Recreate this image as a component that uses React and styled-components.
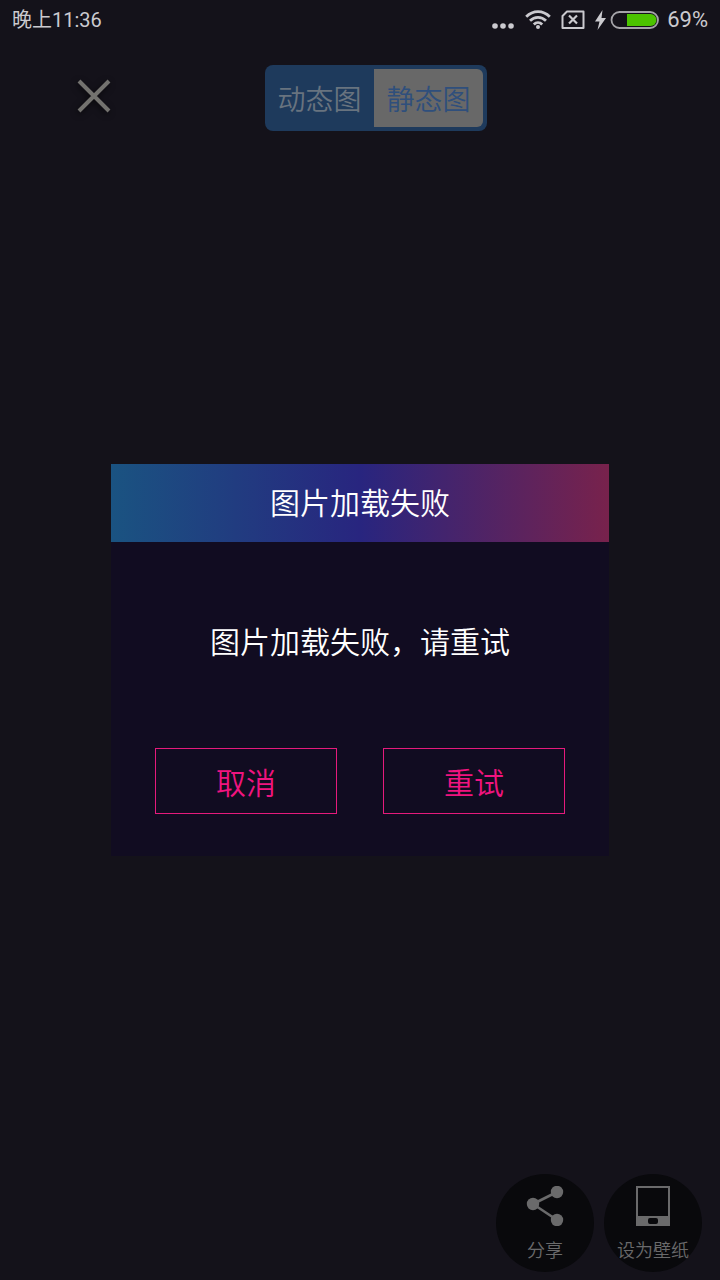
import React, { useState } from "react";
import styled, { createGlobalStyle } from "styled-components";

const GlobalStyle = createGlobalStyle`
  * {
    box-sizing: border-box;
  }

  body {
    margin: 0;
    background: #14121a;
    font-family: Roboto, "Noto Sans CJK SC", sans-serif;
  }

  button {
    margin: 0;
    padding: 0;
    border: none;
    background: none;
    font-family: "Noto Sans CJK SC", sans-serif;
    cursor: pointer;
  }
`;

const Page = styled.div`
  display: flex;
  flex-direction: column;
  min-height: 100vh;
`;

// System status bar
const StatusBar = styled.header`
  display: flex;
  align-items: center;
  justify-content: space-between;
  height: 40px;
  padding: 0 12px;
  color: #cbcacf;
  font-size: 20px;
  line-height: 40px;
`;

const StatusIcons = styled.div`
  display: flex;
  align-items: center;
  gap: 10px;

  svg {
    display: block;
  }
`;

const BatteryLevel = styled.div`
  display: flex;
  align-items: center;
  gap: 8px;
  font-size: 22px;
`;

// Close button and picture type switch
const TopBar = styled.nav`
  display: grid;
  grid-template-columns: 1fr auto 1fr;
  align-items: start;
  padding: 25px 32px 0 64px;
`;

const CloseButton = styled.button`
  display: grid;
  place-items: center;
  width: 60px;
  height: 62px;

  svg {
    filter: drop-shadow(-1px 2px 3px rgba(0, 0, 0, 0.6));
  }
`;

const Switch = styled.div`
  display: flex;
  height: 66px;
  padding: 4px 4px 4px 0;
  border-radius: 8px;
  background: #1e3a5c;
`;

const SwitchOption = styled.button`
  width: 109px;
  border-radius: 0 6px 6px 0;
  background: ${(props) => (props.$active ? "#686868" : "transparent")};
  color: ${(props) => (props.$active ? "#2f4f7c" : "#68737f")};
  font-size: 28px;
  font-weight: 350;
  line-height: 40px;
`;

const ActionBar = styled.footer`
  display: flex;
  justify-content: flex-end;
  gap: 10px;
  margin-top: auto;
  padding: 0 18px 8px;
`;

const ActionButton = styled.button`
  display: flex;
  flex-direction: column;
  align-items: center;
  gap: 10px;
  width: 98px;
  height: 98px;
  padding-top: 12px;
  border-radius: 50%;
  background: #09090c;
  color: #6a6a6b;
  font-size: 18px;
  font-weight: 350;
  line-height: 26px;
  white-space: nowrap;
`;

// Dialog sits over the page, centered below the status bar
const Overlay = styled.div`
  position: fixed;
  inset: 40px 0 0;
  display: grid;
  place-items: center;
`;

const Dialog = styled.section`
  width: calc(100% - 222px);
  max-width: 560px;
  background: #110c21;
  color: #ffffff;
  text-align: center;
`;

const DialogTitle = styled.h2`
  margin: 0;
  padding: 18px 0 16px;
  background: linear-gradient(90deg, #1a5381 0%, #28257f 50%, #78224c 100%);
  font-size: 30px;
  font-weight: 350;
  line-height: 44px;
`;

const DialogMessage = styled.p`
  margin: 0;
  padding: 79px 0 83px;
  font-size: 30px;
  font-weight: 350;
  line-height: 44px;
`;

const DialogActions = styled.div`
  display: grid;
  grid-template-columns: 1fr 1fr;
  gap: 46px;
  padding: 0 44px 42px;
`;

const DialogButton = styled.button`
  height: 66px;
  border: 1px solid #e51a7c;
  color: #f0147f;
  font-size: 30px;
  font-weight: 350;
  line-height: 44px;
`;

const MoreIcon = () => (
  <svg width="24" height="20" viewBox="0 0 24 20" fill="#cbcacf">
    <circle cx="4" cy="16" r="2.8" />
    <circle cx="12" cy="16" r="2.8" />
    <circle cx="20" cy="16" r="2.8" />
  </svg>
);

const WifiIcon = () => (
  <svg width="26" height="20" viewBox="0 0 26 20" fill="none" stroke="#cbcacf" strokeWidth="2.8">
    <path d="M1.2 6.8C8 0 18 0 24.8 6.8" />
    <path d="M5 10.8C9.6 6.2 16.4 6.2 21 10.8" />
    <path d="M8.8 14.4C11.2 12 14.8 12 17.2 14.4" />
    <circle cx="13" cy="17" r="2" fill="#cbcacf" stroke="none" />
  </svg>
);

const NoSimIcon = () => (
  <svg width="24" height="20" viewBox="0 0 24 20" fill="none" stroke="#cbcacf" strokeWidth="2">
    <path d="M6 1.5H22.5V18H1.5V6Z" strokeLinejoin="round" />
    <path d="M8 5.5L16 13.5M16 5.5L8 13.5" strokeWidth="2.2" />
  </svg>
);

const BatteryIcon = () => (
  <svg width="64" height="20" viewBox="0 0 64 20">
    <path d="M7.5 0L0 11.5H4.5L2.5 20L11 8H6.5Z" fill="#cbcacf" />
    <rect x="16.5" y="2" width="46.5" height="16" rx="8" fill="none" stroke="#a5a4a9" strokeWidth="1.8" />
    <path d="M32 4H55.5A6 6 0 0 1 55.5 16H32Z" fill="#4cc400" />
  </svg>
);

const CloseIcon = () => (
  <svg width="34" height="34" viewBox="0 0 34 34" stroke="#73726f" strokeWidth="4">
    <path d="M2 2L32 32M32 2L2 32" />
  </svg>
);

const ShareIcon = () => (
  <svg width="40" height="40" viewBox="0 0 40 40" fill="#6a6a6b">
    <path d="M32 6L8 18L32 34" fill="none" stroke="#6a6a6b" strokeWidth="2.6" />
    <circle cx="32" cy="6" r="6.2" />
    <circle cx="8" cy="18" r="6.2" />
    <circle cx="32" cy="34" r="6.2" />
  </svg>
);

const WallpaperIcon = () => (
  <svg width="40" height="40" viewBox="0 0 40 40">
    <path
      d="M3 0H37V40H3ZM5 2V30H35V2ZM17 32Q15 32 15 34V36Q15 38 17 38H23Q25 38 25 36V34Q25 32 23 32Z"
      fill="#6a6a6b"
      fillRule="evenodd"
    />
  </svg>
);

const App = () => {
  const [type, setType] = useState("静态图");
  const [open, setOpen] = useState(true);

  return (
    <Page>
      <GlobalStyle />
      <StatusBar>
        <span>晚上11:36</span>
        <StatusIcons>
          <MoreIcon />
          <WifiIcon />
          <NoSimIcon />
          <BatteryLevel>
            <BatteryIcon />
            <span>69%</span>
          </BatteryLevel>
        </StatusIcons>
      </StatusBar>

      <TopBar>
        <CloseButton aria-label="关闭">
          <CloseIcon />
        </CloseButton>
        <Switch>
          {["动态图", "静态图"].map((name) => (
            <SwitchOption
              key={name}
              $active={type === name}
              aria-pressed={type === name}
              onClick={() => setType(name)}
            >
              {name}
            </SwitchOption>
          ))}
        </Switch>
      </TopBar>

      <ActionBar>
        <ActionButton>
          <ShareIcon />
          分享
        </ActionButton>
        <ActionButton>
          <WallpaperIcon />
          设为壁纸
        </ActionButton>
      </ActionBar>

      {/* Load failure dialog */}
      {open && (
        <Overlay>
          <Dialog role="alertdialog" aria-labelledby="dialog-title">
            <DialogTitle id="dialog-title">图片加载失败</DialogTitle>
            <DialogMessage>图片加载失败，请重试</DialogMessage>
            <DialogActions>
              <DialogButton onClick={() => setOpen(false)}>取消</DialogButton>
              <DialogButton onClick={() => setOpen(false)}>重试</DialogButton>
            </DialogActions>
          </Dialog>
        </Overlay>
      )}
    </Page>
  );
};

export default App;
